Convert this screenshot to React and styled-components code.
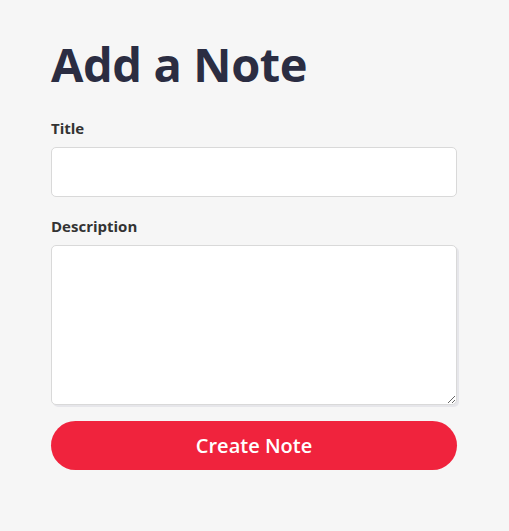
import React from "react";
import styled, { createGlobalStyle } from "styled-components";

const Global = createGlobalStyle`
  html, body { margin: 0; padding: 0; background: #f6f6f6; }
  body { font-family: "Open Sans", "Noto Sans", sans-serif; }
  * { box-sizing: border-box; }
`;

const Page = styled.main`
  width: 406px;
  margin: 0 0 0 51px;
  padding-top: 32px;
`;

const Heading = styled.h1`
  margin: 0 0 22px;
  font-size: 47px;
  line-height: 64px;
  font-weight: 700;
  color: #2b2d42;
  letter-spacing: -0.4px;
`;

const Form = styled.form`
  display: flex;
  flex-direction: column;
`;

const Label = styled.label`
  font-size: 15px;
  font-weight: 700;
  color: #333;
  line-height: 20px;
  margin-bottom: 9px;
`;

const Input = styled.input`
  height: 50px;
  border: 1px solid #d9d9d9;
  border-radius: 5px;
  background: #fff;
  margin-bottom: 19px;
  padding: 0 12px;
  font-size: 16px;
`;

const TextArea = styled.textarea`
  height: 160px;
  border: 1px solid #d9d9d9;
  border-radius: 5px;
  background: #fff;
  padding: 12px;
  font-size: 16px;
  resize: vertical;
  box-shadow: 2px 2px 0 #e6e6ea;
  margin-bottom: 16px;
`;

const Button = styled.button`
  height: 49px;
  border: none;
  border-radius: 25px;
  background: #f0233d;
  color: #fff;
  font-family: "Open Sans", "Noto Sans", sans-serif;
  font-size: 20px;
  font-weight: 600;
  cursor: pointer;
`;

export default function App() {
  return (
    <>
      <Global />
      <Page>
        <Heading>Add a Note</Heading>
        <Form onSubmit={(e) => e.preventDefault()}>
          <Label htmlFor="title">Title</Label>
          <Input id="title" type="text" />
          <Label htmlFor="desc">Description</Label>
          <TextArea id="desc" />
          <Button type="submit">Create Note</Button>
        </Form>
      </Page>
    </>
  );
}
